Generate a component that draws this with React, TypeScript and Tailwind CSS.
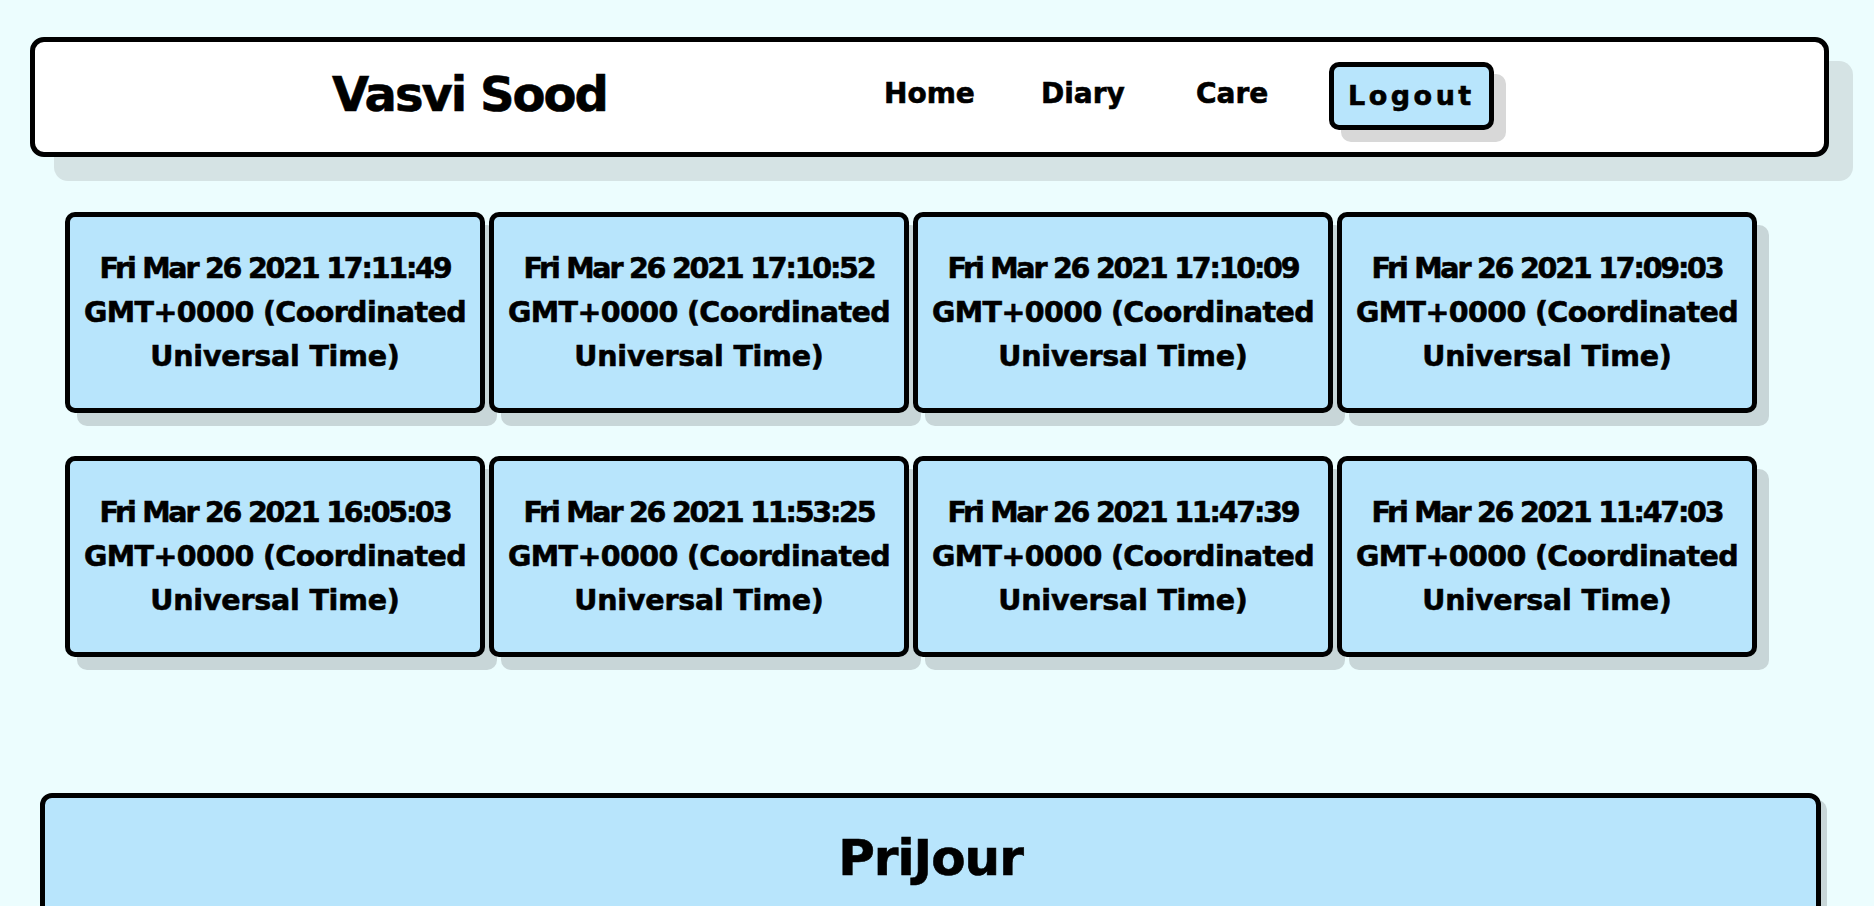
import React from "react";

const entries = [
  "Fri Mar 26 2021 17:11:49",
  "Fri Mar 26 2021 17:10:52",
  "Fri Mar 26 2021 17:10:09",
  "Fri Mar 26 2021 17:09:03",
  "Fri Mar 26 2021 16:05:03",
  "Fri Mar 26 2021 11:53:25",
  "Fri Mar 26 2021 11:47:39",
  "Fri Mar 26 2021 11:47:03",
];

const font = { fontFamily: '"DejaVu Sans", "Open Sans", sans-serif' };

const App = () => {
  return (
    <div className="min-h-screen bg-[#ecfdfe] text-black pt-[37px] pb-40 [-webkit-text-stroke:0.6px_black]" style={font}>
      {/* Header */}
      <header className="ml-[30px] w-[1799px] h-[120px] pb-[6px] bg-white border-[5px] border-black rounded-[14px] shadow-[24px_24px_0_#d5e3e4] flex items-center">
        <h1 className="ml-[297px] w-[552px] text-[48px] font-bold tracking-[-2px] leading-none">
          Vasvi Sood
        </h1>
        <nav className="flex items-center text-[28px] font-bold">
          <a href="#" className="w-[157px]">Home</a>
          <a href="#" className="w-[155px]">Diary</a>
          <a href="#" className="w-[133px]">Care</a>
          <button className="mt-[4px] h-[68px] px-[14px] bg-[#b8e5fc] border-[5px] border-black rounded-[10px] shadow-[12px_12px_0_#d8d8d8] tracking-[3.5px] text-[27px] font-bold">
            Logout
          </button>
        </nav>
      </header>

      {/* Entries */}
      <main className="ml-[65px] mt-[55px] grid grid-cols-[repeat(4,420px)] gap-x-[4px] gap-y-[43px]">
        {entries.map((d, i) => (
          <div
            key={i}
            className="h-[201px] bg-[#b8e5fc] border-[5px] border-black rounded-[10px] shadow-[12px_13px_0_#c8d6d8] flex items-center justify-center text-center px-1"
          >
            <p className="text-[28.5px] font-bold leading-[44px] tracking-[-0.6px]">
              <span className="tracking-[-2.2px]">{d}</span>
              <br />
              GMT+0000 (Coordinated
              <br />
              <span className="tracking-[-0.2px]">Universal Time)</span>
            </p>
          </div>
        ))}
      </main>

      {/* Footer */}
      <footer className="ml-[40px] mt-[136px] w-[1781px] h-[300px] bg-[#b8e5fc] border-[5px] border-black rounded-[12px] shadow-[6px_6px_0_#c8d6d8] pt-[24px] flex justify-center">
        <h2 className="text-[50px] font-bold tracking-[-1px] leading-[72px] h-[72px]">PriJour</h2>
      </footer>
    </div>
  );
};

export default App;
